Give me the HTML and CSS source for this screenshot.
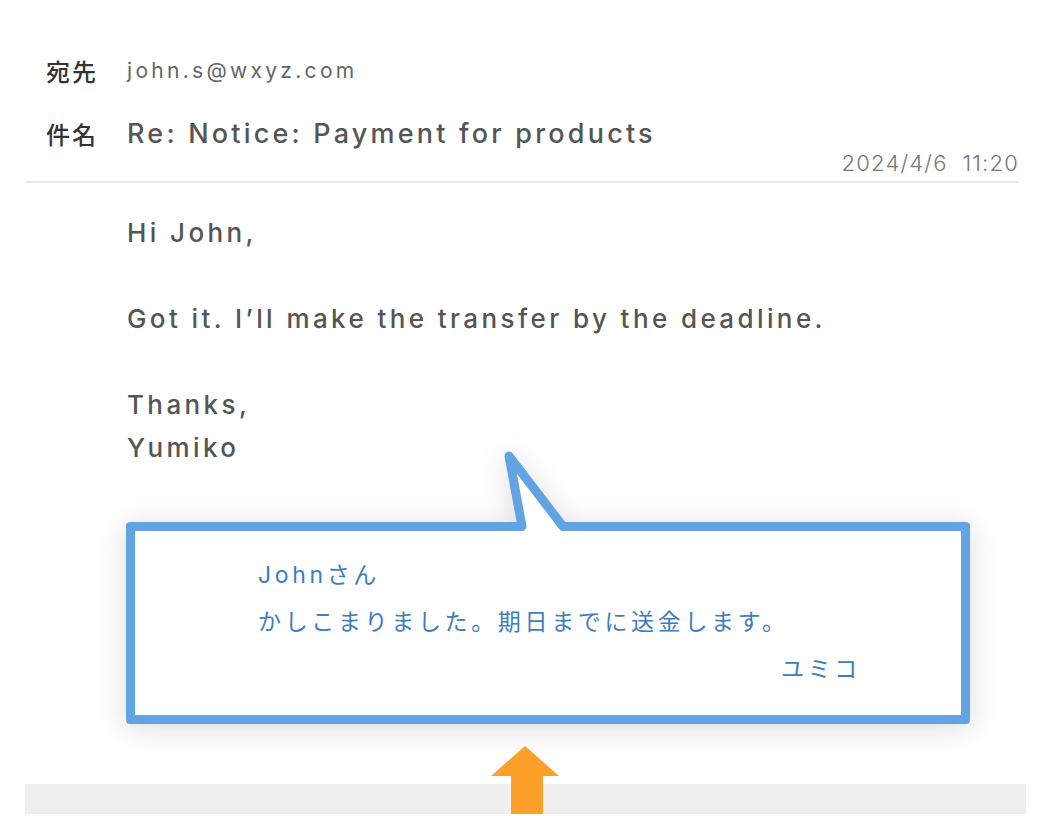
FILE: index.html
```html
<!DOCTYPE html>
<html lang="ja">
<head>
<meta charset="utf-8">
<title>Mail</title>
<link rel="stylesheet" href="styles.css">
</head>
<body>
<div class="mail">
  <div class="head">
    <div class="row row-to">
      <span class="label">宛先</span>
      <span class="to">john.s@wxyz.com</span>
    </div>
    <div class="row row-subject">
      <span class="label">件名</span>
      <span class="subject">Re: Notice: Payment for products</span>
    </div>
    <div class="date">2024/4/6  11:20</div>
  </div>
  <div class="body">
    <p class="para">Hi John,</p>
    <p class="para">Got it. I’ll make the transfer by the deadline.</p>
    <p class="para">Thanks,<br>Yumiko</p>
  </div>
  <div class="bubble">
    <svg class="tail" width="100" height="100" viewBox="0 0 100 100" aria-hidden="true">
      <polygon points="19,15 32,92 73,92" fill="#ffffff"/>
      <polyline points="10,85.5 32,85.5 19,15 73,85.5 90,85.5" fill="none" stroke="#62a3e4" stroke-width="9" stroke-linejoin="round"/>
    </svg>
    <p class="jp-line">Johnさん</p>
    <p class="jp-line">かしこまりました。期日までに送金します。</p>
    <p class="jp-line jp-sign">ユミコ</p>
  </div>
  <div class="band">
    <svg class="arrow" width="68" height="71" viewBox="0 0 68 71" aria-hidden="true">
      <polygon points="34,0 68,30 52,30 52,71 20,71 20,30 0,30" fill="#fca02a"/>
    </svg>
  </div>
</div>
</body>
</html>
```
FILE: styles.css
```css
html, body {
  margin: 0;
  padding: 0;
  background: #ffffff;
  overflow: hidden;
}

body {
  font-family: Inter, "Noto Sans CJK JP", sans-serif;
}

.mail {
  margin-left: 25px;
  width: 994px;
  padding-top: 50px;
}

.head {
  border-bottom: 2px solid #e8e8e8;
  padding-bottom: 6px;
}

.row {
  display: flex;
  align-items: center;
  padding-left: 21px;
}

.row-to {
  height: 40px;
}

.row-subject {
  height: 36px;
  margin-top: 25px;
}

.label {
  width: 81px;
  flex: none;
  font-family: "Noto Sans CJK JP", sans-serif;
  font-size: 24px;
  font-weight: 500;
  letter-spacing: 2px;
  color: #333333;
}

.to {
  font-size: 21px;
  font-weight: 400;
  letter-spacing: 3.3px;
  color: #666666;
}

.subject {
  font-size: 27px;
  font-weight: 500;
  letter-spacing: 3.2px;
  color: #555555;
}

.date {
  text-align: right;
  white-space: pre;
  font-size: 22px;
  font-weight: 300;
  line-height: 24px;
  letter-spacing: 1.2px;
  color: #777777;
}

.body {
  padding: 28px 0 0 102px;
}

.para {
  margin: 0 0 43px 0;
  font-size: 26px;
  font-weight: 500;
  line-height: 43px;
  letter-spacing: 3.4px;
  color: #555555;
}

.para:last-child {
  margin-bottom: 0;
}

.bubble {
  position: relative;
  margin: 53px 0 0 101px;
  width: 844px;
  height: 202px;
  box-sizing: border-box;
  border: 9px solid #62a3e4;
  border-radius: 4px;
  background: #ffffff;
  padding: 21px 100px 0 123px;
  filter: drop-shadow(0 4px 14px rgba(0, 0, 0, 0.14));
}

.tail {
  position: absolute;
  left: 355px;
  top: -90px;
}

.jp-line {
  margin: 0;
  font-family: Inter, "Noto Sans CJK JP", sans-serif;
  font-size: 23px;
  line-height: 47px;
  letter-spacing: 3.65px;
  color: #3d7dc0;
}

.jp-sign {
  text-align: right;
}

.band {
  position: relative;
  margin-top: 60px;
  margin-right: -7px;
  height: 30px;
  background: #efefef;
}

.arrow {
  position: absolute;
  left: 466px;
  top: -38px;
  display: block;
}
```
